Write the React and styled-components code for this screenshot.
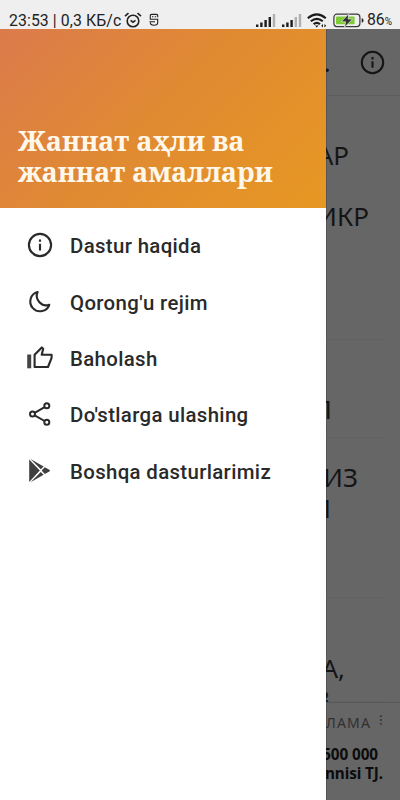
import React from "react";
import styled, { createGlobalStyle } from "styled-components";

const GlobalStyle = createGlobalStyle`
    * {
        box-sizing: border-box;
    }
    body {
        margin: 0;
        background: #666666;
    }
`;

const Screen = styled.div`
    display: flex;
    flex-direction: column;
    width: 400px;
    height: 800px;
    overflow: hidden;
    font-family: Roboto, "Noto Sans", sans-serif;
`;

// status bar
const StatusBar = styled.header`
    display: flex;
    align-items: flex-start;
    justify-content: space-between;
    height: 29px;
    padding: 11px 8px 0 9px;
    background: #efefef;
    color: #222222;
`;

const StatusGroup = styled.div`
    display: flex;
    align-items: center;
    height: 18px;
    gap: ${(props) => props.$gap}px;
`;

const StatusText = styled.span`
    padding-top: 2px;
    font-size: 15.8px;
    line-height: 18px;
    letter-spacing: ${(props) => props.$spacing || 0}px;
    white-space: pre;

    small {
        font-size: 10px;
    }
`;

const Body = styled.div`
    display: flex;
    flex: 1;
    min-height: 0;
`;

// side menu
const Drawer = styled.nav`
    width: 326px;
    flex-shrink: 0;
    background: #ffffff;
`;

const DrawerHeader = styled.div`
    display: flex;
    align-items: flex-end;
    height: 178.5px;
    padding: 0 18px 21px;
    background: linear-gradient(135deg, #db7b4c 0%, #e08a32 48%, #e79822 100%);
`;

const DrawerTitle = styled.h1`
    margin: 0;
    color: #fff8ea;
    font-family: "Noto Serif", "DejaVu Serif Condensed", "DejaVu Serif", serif;
    font-size: 27px;
    font-weight: bold;
    line-height: 31px;
    white-space: nowrap;
`;

const Menu = styled.ul`
    margin: 0;
    padding: 9.5px 0 0;
    list-style: none;
`;

const MenuItem = styled.li`
    display: flex;
    align-items: center;
    height: 56.4px;
    padding-left: 26px;
    gap: 16px;
    color: #2a2a2a;
    white-space: nowrap;

    svg {
        flex-shrink: 0;
    }
`;

const MenuLabel = styled.span`
    padding-top: 2px;
    font-size: 20.4px;
    font-weight: 500;
    letter-spacing: 0.35px;
`;

// dimmed page behind the menu
const Page = styled.main`
    display: flex;
    flex: 1;
    flex-direction: column;
    min-width: 0;
    overflow: hidden;
    background: #666666;
    color: #151515;
    box-shadow: inset 1px 0 0 #555555;
`;

const AppBar = styled.div`
    display: flex;
    align-items: center;
    justify-content: space-between;
    height: 67px;
    flex-shrink: 0;
    padding-right: 14px;
    border-bottom: 1px solid #5b5b5b;
`;

const AppBarTitle = styled.span`
    margin-left: -2px;
    padding-top: 4px;
    font-family: "Noto Sans", sans-serif;
    font-size: 21px;
    font-weight: bold;
    line-height: 30px;
`;

const List = styled.div`
    height: 606px;
    flex-shrink: 0;
    padding-top: 19px;
    overflow: hidden;
`;

const Card = styled.div`
    height: ${(props) => props.$height}px;
    margin-right: 14px;
    padding-top: ${(props) => props.$top}px;
    border-bottom: 1px solid #626262;
`;

const Line = styled.div`
    display: flex;
    justify-content: flex-end;
    height: 30.6px;
    padding-right: ${(props) => props.$right || 0}px;
    font-family: "Noto Sans", sans-serif;
    font-size: 26px;
    line-height: 32px;
    white-space: nowrap;
`;

const Ad = styled.div`
    flex: 1;
    padding-top: 7px;
    border-top: 1px solid #595959;
    font-family: "Noto Sans", sans-serif;
`;

const AdLabel = styled.div`
    display: flex;
    justify-content: flex-end;
    align-items: center;
    height: 24px;
    margin-bottom: 10px;
    padding-right: 17px;
    gap: 8px;
    color: #303030;
    font-size: 14px;
    letter-spacing: 1.2px;

    svg {
        margin-bottom: 5px;
    }
`;

const AdText = styled.div`
    display: flex;
    justify-content: flex-end;
    height: 19px;
    padding-right: ${(props) => props.$right}px;
    color: #0c0c0c;
    font-size: 15.3px;
    font-weight: bold;
    line-height: 20px;
    letter-spacing: -0.1px;
    white-space: nowrap;
`;

function InfoIcon({ size = 26 }) {
    return (
        <svg width={size} height={size} viewBox="0 0 26 26" fill="none" stroke="currentColor" strokeWidth="2">
            <circle cx="13" cy="13" r="10.3" />
            <path d="M13 11.8v6.2M13 7.8v2.2" />
        </svg>
    );
}

function MoonIcon() {
    return (
        <svg width="28" height="28" viewBox="0 0 28 28" fill="none" stroke="currentColor" strokeWidth="2.1" strokeLinejoin="round">
            <path d="M11.6 4A9.8 9.8 0 1 0 23.3 16.8C16 19.4 8.2 11.6 11.6 4Z" />
        </svg>
    );
}

function LikeIcon() {
    return (
        <svg width="28" height="28" viewBox="0 0 28 28" fill="none" stroke="currentColor" strokeWidth="2.1" strokeLinejoin="round">
            <path d="M1.2 10.5h4v13.8h-4z" fill="#444444" stroke="none" />
            <path d="M8.6 23V10.8L15.8 3.4l1.4 1.3-1.5 6.1h9.9v3L22 23Z" />
        </svg>
    );
}

function ShareIcon() {
    return (
        <svg width="28" height="28" viewBox="0 0 28 28" fill="none" stroke="currentColor" strokeWidth="2">
            <circle cx="6.5" cy="14" r="2.5" />
            <circle cx="20.8" cy="5.8" r="2.5" />
            <circle cx="20.8" cy="22.3" r="2.5" />
            <path d="M8.7 12.8l9.9-5.7M8.7 15.3l9.9 5.7" />
        </svg>
    );
}

function PlayStoreIcon() {
    return (
        <svg width="28" height="28" viewBox="0 0 28 28" fill="#3f3f3f">
            <path d="M3.2 2.4v22.6L13.8 13.6Z" />
            <path d="M4.6 2l13 7.4-2.8 2.8Z" />
            <path d="M4.6 25.2l13-7.4-2.8-2.8Z" />
            <path d="M18.8 10.3l4.6 2.5q1.2.8 0 1.6l-4.6 2.5L15.6 13.6Z" />
        </svg>
    );
}

function AlarmIcon() {
    return (
        <svg width="18" height="17" viewBox="0 0 18 17" fill="none" stroke="currentColor" strokeWidth="1.6">
            <circle cx="9" cy="9" r="5.8" />
            <path d="M1 4.2L4.5 1.2M17 4.2l-3.5-3M6.6 8.3L9 10.2l2.5-1.9" />
        </svg>
    );
}

function ServiceIcon() {
    return (
        <svg width="10" height="14" viewBox="0 0 10 14" fill="none" stroke="currentColor" strokeWidth="1.1">
            <path d="M8.7 4.2V2.8Q8.7 1.4 7.3 1.4h-4.6Q1.3 1.4 1.3 2.8v3.4h7.4v3.6Q8.7 12.3 5 12.3T1.3 9.6M3 3.8h1.4M5.7 3.8h1.4M.5 8.8h5.5" />
        </svg>
    );
}

function SignalIcon({ bars }) {
    return (
        <svg width="20" height="14" viewBox="0 0 20 14">
            {[2.5, 4.5, 7, 10, 13].map((height, i) => (
                <rect key={i} x={i * 4.2} y={14 - height} width="2.4" height={height} fill={i < bars ? "#1c1c1c" : "#b0b0b0"} />
            ))}
        </svg>
    );
}

function WifiIcon() {
    return (
        <svg width="20" height="15" viewBox="0 0 20 15" fill="none" stroke="#1c1c1c" strokeWidth="2.1">
            <path d="M.8 5.2Q9.8-2.5 18.8 5.2M3.8 8.3q6-5 12 0M6.6 11.2q3.2-2.5 6.4 0" />
            <path d="M8 12.4h3.6L9.8 14.6Z" fill="#1c1c1c" stroke="none" />
            <path d="M14.2 12.8l1.8-1.8v3.6ZM19.2 12.8L17.4 11v3.6Z" fill="#1c1c1c" stroke="none" />
        </svg>
    );
}

function BatteryIcon() {
    return (
        <svg width="31" height="15" viewBox="0 0 31 15">
            <rect x=".9" y="1.2" width="26" height="12.4" rx="3" fill="#efefef" stroke="#383838" strokeWidth="1.2" />
            <path d="M28.7 5.2q1.8 0 1.8 2.2t-1.8 2.2Z" fill="#222222" />
            <rect x="3" y="3.5" width="18.6" height="7.8" rx="1" fill="#7ccc32" />
            <path d="M15.9.6L8.2 8.8h4.4L11.4 14.4l8.2-8.4h-4.5Z" fill="#333333" stroke="#efefef" strokeWidth=".7" />
        </svg>
    );
}

const menuItems = [
    { title: "Dastur haqida", icon: <InfoIcon size={28} /> },
    { title: "Qorong'u rejim", icon: <MoonIcon /> },
    { title: "Baholash", icon: <LikeIcon /> },
    { title: "Do'stlarga ulashing", icon: <ShareIcon /> },
    { title: "Boshqa dasturlarimiz", icon: <PlayStoreIcon /> },
];

function App() {
    return (
        <>
            <GlobalStyle />
            <Screen>
                <StatusBar>
                    <StatusGroup $gap={7}>
                        <StatusGroup $gap={3}>
                            <StatusText $spacing={0.1}>23:53 | 0,3 КБ/с</StatusText>
                            <AlarmIcon />
                        </StatusGroup>
                        <ServiceIcon />
                    </StatusGroup>
                    <StatusGroup $gap={5.5}>
                        <SignalIcon bars={4} />
                        <SignalIcon bars={3} />
                        <WifiIcon />
                        <StatusGroup $gap={3}>
                            <BatteryIcon />
                            <StatusText>86<small>%</small></StatusText>
                        </StatusGroup>
                    </StatusGroup>
                </StatusBar>

                <Body>
                    <Drawer>
                        <DrawerHeader>
                            <DrawerTitle>
                                Жаннат аҳли ва<br />жаннат амаллари
                            </DrawerTitle>
                        </DrawerHeader>
                        <Menu>
                            {menuItems.map((item) => (
                                <MenuItem key={item.title}>
                                    {item.icon}
                                    <MenuLabel>{item.title}</MenuLabel>
                                </MenuItem>
                            ))}
                        </Menu>
                    </Drawer>

                    <Page>
                        <AppBar>
                            <AppBarTitle>.</AppBarTitle>
                            <InfoIcon size={27} />
                        </AppBar>
                        <List>
                            <Card $height={225} $top={24}>
                                <Line $right={37}>АР</Line>
                                <Line />
                                <Line $right={17}>ИКР</Line>
                            </Card>
                            <Card $height={98} $top={53}>
                                <Line $right={54}>Л</Line>
                            </Card>
                            <Card $height={160} $top={23}>
                                <Line $right={28}>ИЗ</Line>
                                <Line $right={55}>И</Line>
                            </Card>
                            <Card $height={104} $top={54}>
                                <Line $right={41}>А,</Line>
                                <Line $right={56}>В</Line>
                            </Card>
                        </List>
                        <Ad>
                            <AdLabel>
                                ЛАМА
                                <svg width="4" height="12" viewBox="0 0 4 12" fill="currentColor">
                                    <circle cx="2" cy="2" r="1" />
                                    <circle cx="2" cy="6" r="1" />
                                    <circle cx="2" cy="10" r="1" />
                                </svg>
                            </AdLabel>
                            <AdText $right={22}>500 000</AdText>
                            <AdText $right={17}>nnisi TJ.</AdText>
                        </Ad>
                    </Page>
                </Body>
            </Screen>
        </>
    );
}

export default App;
